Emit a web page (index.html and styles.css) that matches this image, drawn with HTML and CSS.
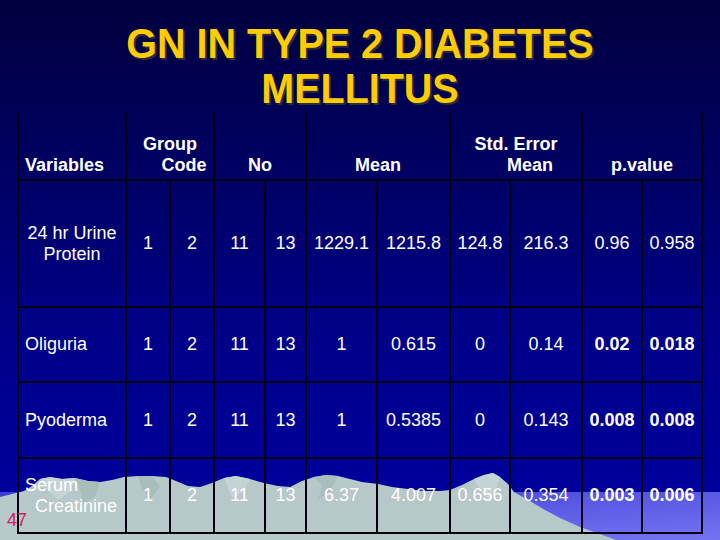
FILE: index.html
```html
<!DOCTYPE html>
<html>
<head>
<meta charset="utf-8">
<title>GN in Type 2 Diabetes Mellitus</title>
<link rel="stylesheet" href="styles.css">
</head>
<body>
<div class="slide">
  <svg class="scenery" width="720" height="540" viewBox="0 0 720 540" aria-hidden="true">
    <defs>
      <linearGradient id="band" x1="0" y1="0" x2="1" y2="1">
        <stop offset="0" stop-color="#3c3cd6"/>
        <stop offset="1" stop-color="#7474f2"/>
      </linearGradient>
    </defs>
    <rect x="0" y="492" width="720" height="48" fill="url(#band)"/>
    <polygon fill="#b6c8c8" points="0,497 12,494 24,491 32,486 40,479 50,477 62,479 75,478 88,481 100,482 112,480 124,477 138,476 152,476 166,477 176,481 188,486 200,487 212,483 224,478 236,476 250,479 264,483 278,486 290,487 302,481 314,477 326,475 338,476 350,479 362,482 378,484 392,487 408,489 424,491 440,491 450,490 462,485 474,479 484,475 493,473 500,477 508,484 514,492 530,501 545,510 560,518 580,527 600,534 616,540 0,540"/>
    <polygon fill="#c4d3d3" points="40,479 50,477 62,479 75,478 70,492 58,500 48,490"/>
    <polygon fill="#aabdbd" points="75,478 88,481 100,482 96,495 84,505 80,490"/>
    <polygon fill="#aabdbd" points="138,476 152,476 160,486 150,500 142,488"/>
    <polygon fill="#c4d3d3" points="224,478 236,476 250,479 244,492 232,498"/>
    <polygon fill="#aabdbd" points="314,477 326,475 338,476 330,492 318,500 322,486"/>
    <polygon fill="#c4d3d3" points="474,479 484,475 493,473 500,477 496,490 488,500 480,490"/>
  </svg>

  <h1 class="title">GN IN TYPE 2 DIABETES<br>MELLITUS</h1>

  <table class="data">
    <colgroup>
      <col class="c-var">
      <col class="c-g1"><col class="c-g2">
      <col class="c-n1"><col class="c-n2">
      <col class="c-m1"><col class="c-m2">
      <col class="c-s1"><col class="c-s2">
      <col class="c-p1"><col class="c-p2">
    </colgroup>
    <thead>
      <tr class="r-head">
        <th class="left">Variables</th>
        <th colspan="2">Group<br><span class="shift">Code</span></th>
        <th colspan="2">No</th>
        <th colspan="2">Mean</th>
        <th colspan="2">Std. Error<br><span class="shift">Mean</span></th>
        <th colspan="2">p.value</th>
      </tr>
    </thead>
    <tbody>
      <tr class="r-1">
        <td>24 hr Urine<br>Protein</td>
        <td>1</td><td>2</td><td>11</td><td>13</td>
        <td>1229.1</td><td>1215.8</td><td>124.8</td><td>216.3</td>
        <td>0.96</td><td>0.958</td>
      </tr>
      <tr class="r-2">
        <td class="left">Oliguria</td>
        <td>1</td><td>2</td><td>11</td><td>13</td>
        <td>1</td><td>0.615</td><td>0</td><td>0.14</td>
        <td class="sig">0.02</td><td class="sig">0.018</td>
      </tr>
      <tr class="r-3">
        <td class="left">Pyoderma</td>
        <td>1</td><td>2</td><td>11</td><td>13</td>
        <td>1</td><td>0.5385</td><td>0</td><td>0.143</td>
        <td class="sig">0.008</td><td class="sig">0.008</td>
      </tr>
      <tr class="r-4">
        <td class="left">Serum<br><span class="indent">Creatinine</span></td>
        <td>1</td><td>2</td><td>11</td><td>13</td>
        <td>6.37</td><td>4.007</td><td>0.656</td><td>0.354</td>
        <td class="sig">0.003</td><td class="sig">0.006</td>
      </tr>
    </tbody>
  </table>

  <div class="slide-num">47</div>
</div>
</body>
</html>
```

FILE: styles.css
```css
html, body {
  margin: 0;
  padding: 0;
}

body {
  width: 720px;
  height: 540px;
  overflow: hidden;
  background: #000050;
}

.slide {
  position: relative;
  width: 720px;
  height: 540px;
  overflow: hidden;
  display: flex;
  flex-direction: column;
  background: linear-gradient(to bottom, #00003e 0px, #000066 180px, #000088 330px, #00009c 490px);
  font-family: "Liberation Sans", Arial, sans-serif;
}

.scenery {
  position: absolute;
  left: 0;
  top: 0;
  z-index: 0;
}

.title {
  position: relative;
  z-index: 1;
  margin: 0 0 2px 0;
  padding-top: 21px;
  font-family: "Liberation Sans", Arial, sans-serif;
  font-size: 42px;
  line-height: 45px;
  font-weight: bold;
  text-align: center;
  color: #ffcc00;
  text-shadow: 2px 2px 0 #2b2b3c;
  transform: scaleX(0.94);
}

.data {
  position: relative;
  z-index: 1;
  margin-left: 17px;
  width: 686px;
  table-layout: fixed;
  border-collapse: collapse;
  color: #ffffff;
  font-size: 18px;
  line-height: 21px;
}

.c-var { width: 108px; }
.c-g1, .c-g2 { width: 44px; }
.c-n1 { width: 51px; }
.c-n2 { width: 41px; }
.c-m1 { width: 71px; }
.c-m2 { width: 73px; }
.c-s1 { width: 60px; }
.c-s2 { width: 72px; }
.c-p1, .c-p2 { width: 60px; }

.data th {
  font-weight: bold;
  vertical-align: bottom;
  text-align: center;
  padding: 0 0 3px 0;
  border-left: 2px solid #000010;
  border-right: 2px solid #000010;
  border-bottom: 2px solid #000010;
  border-top: none;
}

.data td {
  text-align: center;
  vertical-align: middle;
  padding: 0;
  border: 2px solid #000010;
  white-space: nowrap;
}

.data .left {
  text-align: left;
  padding-left: 6px;
}

.shift {
  display: inline-block;
  padding-left: 28px;
}

.indent {
  display: inline-block;
  padding-left: 10px;
}

.r-head { height: 67px; }
.r-1 { height: 127px; }
.r-2 { height: 75px; }
.r-3 { height: 76px; }
.r-4 { height: 75px; }

.data .sig {
  font-weight: bold;
}

.slide-num {
  position: absolute;
  z-index: 2;
  left: 7px;
  top: 511px;
  font-size: 18px;
  line-height: 18px;
  color: #d0205c;
}
```
